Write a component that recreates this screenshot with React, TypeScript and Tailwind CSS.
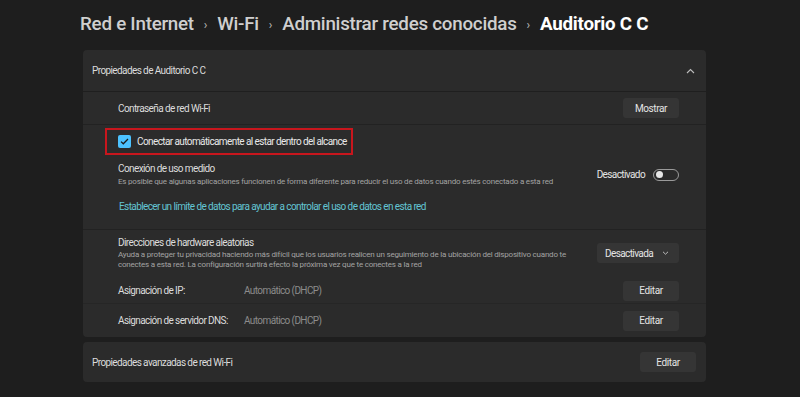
import React from 'react';

const font = { fontFamily: 'Roboto, "Noto Sans", sans-serif' };

const Button: React.FC<{ label: string; className?: string }> = ({ label, className = '' }) => (
  <div
    className={`flex h-[20px] w-[56px] items-center justify-center rounded-[3px] bg-[#353535] text-[10px] tracking-[-0.4px] text-[#e4e4e4] ${className}`}
  >
    {label}
  </div>
);

const App: React.FC = () => {
  return (
    <div className="h-[397px] w-[800px] overflow-hidden bg-[#1e1e1e] text-[#e6e6e6]" style={font}>
      {/* Breadcrumb */}
      <div className="flex h-[50px] items-center whitespace-nowrap pl-[80px] pb-[1px] text-[18.8px] font-medium tracking-[-0.25px] text-[#cfcfcf]">
        <span>Red e Internet</span>
        <span className="mx-[10px] text-[12px] text-[#a8a8a8]">›</span>
        <span>Wi-Fi</span>
        <span className="mx-[10px] text-[12px] text-[#a8a8a8]">›</span>
        <span>Administrar redes conocidas</span>
        <span className="mx-[10px] text-[12px] text-[#a8a8a8]">›</span>
        <span className="font-bold text-white">Auditorio C C</span>
      </div>

      <div className="ml-[83px] flex w-[623px] flex-col gap-[5px] text-[10px] tracking-[-0.6px]">
        {/* Main card */}
        <div className="flex flex-col rounded-[4px] bg-[#2b2b2b]">
          {/* Header */}
          <div className="flex h-[42px] items-center justify-between border-b border-[#1f1f1f] pl-[9px] pr-[11px]">
            <span className="text-[#dcdcdc]">Propiedades de Auditorio C C</span>
            <svg width="9" height="6" viewBox="0 0 9 6" fill="none">
              <path d="M1 5 L4.5 1.5 L8 5" stroke="#bdbdbd" strokeWidth="1.1" />
            </svg>
          </div>

          {/* Password */}
          <div className="flex h-[33px] items-center justify-between border-b border-[#222] pl-[35px] pr-[27px]">
            <span className="text-[#dcdcdc]">Contraseña de red Wi-Fi</span>
            <Button label="Mostrar" />
          </div>

          {/* Auto connect + metered */}
          <div className="flex h-[105px] flex-col border-b border-[#222] pl-[22px] pr-[27px]">
            <div className="mt-[3px] flex h-[27px] w-[248px] items-center gap-[6px] whitespace-nowrap border-2 border-[#c8161d] pl-[11px]">
              <div className="flex h-[13px] w-[13px] items-center justify-center rounded-[2px] bg-[#4cc2ff]">
                <svg width="9" height="7" viewBox="0 0 9 7" fill="none">
                  <path d="M1 3.6 L3.3 5.8 L8 1" stroke="#1b1b1b" strokeWidth="1.3" />
                </svg>
              </div>
              <span className="text-[#e8e8e8]">Conectar automáticamente al estar dentro del alcance</span>
            </div>
            <div className="mt-[7px] flex items-center justify-between pl-[13px]">
              <div className="flex flex-col whitespace-nowrap">
                <span className="leading-[14px] text-[#dcdcdc]">Conexión de uso medido</span>
                <span className="text-[8px] leading-[11px] tracking-[-0.2px] text-[#a3a3a3]">
                  Es posible que algunas aplicaciones funcionen de forma diferente para reducir el uso de datos cuando estés conectado a esta red
                </span>
              </div>
              <div className="flex items-center gap-[8px]">
                <span className="text-[#e4e4e4]">Desactivado</span>
                <div className="flex h-[12px] w-[26px] items-center rounded-full border border-[#9a9a9a] pl-[2px]">
                  <div className="h-[7px] w-[7px] rounded-full bg-[#e6e6e6]" />
                </div>
              </div>
            </div>
            <span className="mt-[12px] whitespace-nowrap pl-[14px] text-[#63c5d3]">
              Establecer un límite de datos para ayudar a controlar el uso de datos en esta red
            </span>
          </div>

          {/* Hardware addresses */}
          <div className="flex items-center justify-between pl-[35px] pr-[27px] pt-[6px]">
            <div className="flex w-[470px] flex-col">
              <span className="leading-[14px] text-[#dcdcdc]">Direcciones de hardware aleatorias</span>
              <span className="text-[8px] leading-[10px] tracking-[-0.2px] text-[#a3a3a3]">
                Ayuda a proteger tu privacidad haciendo más difícil que los usuarios realicen un seguimiento de la ubicación del dispositivo cuando te conectes a esta red. La configuración surtirá efecto la próxima vez que te conectes a la red
              </span>
            </div>
            <div className="flex h-[20px] w-[82px] items-center justify-between rounded-[3px] bg-[#353535] pl-[8px] pr-[10px] text-[#e4e4e4]">
              <span>Desactivada</span>
              <svg width="7" height="4" viewBox="0 0 7 4" fill="none">
                <path d="M1 0.8 L3.5 3.2 L6 0.8" stroke="#bdbdbd" strokeWidth="1" />
              </svg>
            </div>
          </div>

          {/* IP */}
          <div className="flex h-[34px] items-center justify-between border-b border-[#262626] pl-[35px] pr-[27px] pt-[8px]">
            <div className="flex items-center">
              <span className="w-[126px] text-[#dcdcdc]">Asignación de IP:</span>
              <span className="text-[#8c8c8c]">Automático (DHCP)</span>
            </div>
            <Button label="Editar" />
          </div>

          {/* DNS */}
          <div className="flex h-[33px] items-center justify-between pl-[35px] pr-[27px]">
            <div className="flex items-center">
              <span className="w-[126px] text-[#dcdcdc]">Asignación de servidor DNS:</span>
              <span className="text-[#8c8c8c]">Automático (DHCP)</span>
            </div>
            <Button label="Editar" />
          </div>
        </div>

        {/* Advanced card */}
        <div className="flex h-[40px] items-center justify-between rounded-[4px] bg-[#2b2b2b] pl-[9px] pr-[10px]">
          <span className="text-[#dcdcdc]">Propiedades avanzadas de red Wi-Fi</span>
          <Button label="Editar" />
        </div>
      </div>
    </div>
  );
};

export default App;
